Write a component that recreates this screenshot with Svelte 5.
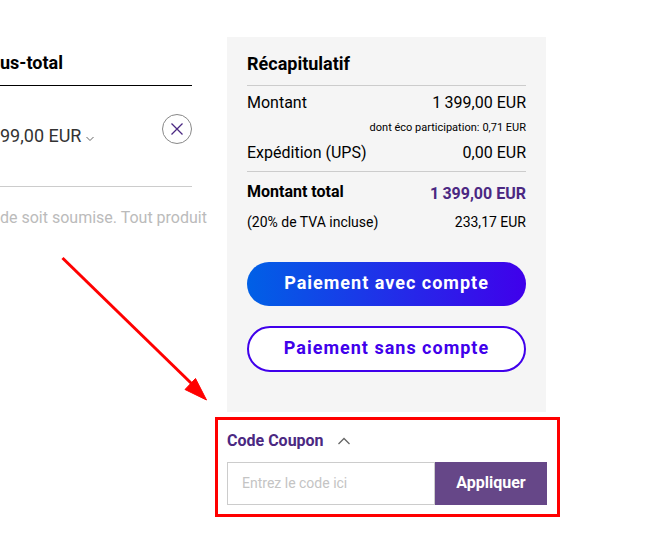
<script>
  let code = $state("");
  let couponOpen = $state(true);
</script>

<div class="page">
  <main class="cart">
    <table class="items">
      <thead>
        <tr>
          <th colspan="2">us-total</th>
        </tr>
      </thead>
      <tbody>
        <tr>
          <td>
            99,00 EUR
            <svg class="caret" viewBox="0 0 8 6" aria-hidden="true">
              <path d="M0.5 1 4 4.5 7.5 1" />
            </svg>
          </td>
          <td class="action">
            <button class="remove" type="button" aria-label="Supprimer">
              <svg viewBox="0 0 12 12" aria-hidden="true">
                <path d="M0.5 0.5 11.5 11.5M11.5 0.5 0.5 11.5" />
              </svg>
            </button>
          </td>
        </tr>
      </tbody>
    </table>
    <p class="note">de soit soumise. Tout produit</p>
    <svg class="arrow" viewBox="0 0 150 150" aria-hidden="true">
      <path class="shaft" d="M0.5 2 130 128" />
      <path class="head" d="M144.5 144 123 133.5 133.5 122.5Z" />
    </svg>
  </main>

  <aside class="side">
    <section class="summary">
      <h2>Récapitulatif</h2>
      <dl class="amounts">
        <div class="row">
          <dt>Montant</dt>
          <dd>1&#8201;399,00 EUR</dd>
        </div>
        <div class="row eco">
          <dt>dont éco participation:</dt>
          <dd>0,71 EUR</dd>
        </div>
        <div class="row">
          <dt>Expédition (UPS)</dt>
          <dd>0,00 EUR</dd>
        </div>
      </dl>
      <dl class="totals">
        <div class="row total">
          <dt>Montant total</dt>
          <dd>1&#8201;399,00 EUR</dd>
        </div>
        <div class="row tax">
          <dt>(20% de TVA incluse)</dt>
          <dd>233,17 EUR</dd>
        </div>
      </dl>
      <div class="checkout">
        <button class="pay primary" type="button">Paiement avec compte</button>
        <button class="pay secondary" type="button">Paiement sans compte</button>
      </div>
    </section>

    <form class="coupon" onsubmit={(e) => e.preventDefault()}>
      <button
        class="toggle"
        type="button"
        aria-expanded={couponOpen}
        onclick={() => (couponOpen = !couponOpen)}
      >
        Code Coupon
        <svg class:closed={!couponOpen} viewBox="0 0 12 8" aria-hidden="true">
          <path d="M0.5 7 6 1.5 11.5 7" />
        </svg>
      </button>
      {#if couponOpen}
        <div class="field">
          <input
            type="text"
            aria-label="Code Coupon"
            placeholder="Entrez le code ici"
            bind:value={code}
          />
          <button class="apply" type="submit">Appliquer</button>
        </div>
      {/if}
    </form>
  </aside>
</div>

<style>
  :global(body) {
    background: #fff;
  }

  .page {
    display: grid;
    grid-template-columns: minmax(0, 1fr) 319px;
    gap: 20px;
    padding: 37px 100px 30px 0;
    font-family: Roboto, "Liberation Sans", sans-serif;
    font-size: 16px;
    line-height: 20px;
    color: #000;
  }

  button,
  input {
    margin: 0;
    box-sizing: border-box;
    font-family: inherit;
  }

  button {
    padding: 0;
    border: 0;
    background: none;
    cursor: pointer;
  }

  svg {
    fill: none;
    stroke: #666;
  }

  .cart {
    position: relative;
  }

  .items {
    width: calc(100% - 15px);
    border-collapse: separate;
    border-spacing: 0;
  }

  .items th {
    padding: 14px 0 10px;
    border-bottom: 1px solid #000;
    font-size: 18px;
    font-weight: 700;
    line-height: 24px;
    text-align: left;
  }

  .items td {
    height: 100px;
    padding: 0;
    border-bottom: 1px solid #ccc;
    font-size: 18px;
    color: #333;
    white-space: nowrap;
  }

  .items .action {
    padding-bottom: 14px;
    height: 86px;
    text-align: right;
  }

  .caret {
    width: 8px;
    height: 6px;
  }

  .remove {
    display: inline-flex;
    align-items: center;
    justify-content: center;
    width: 30px;
    height: 30px;
    border: 1px solid #888;
    border-radius: 50%;
    vertical-align: middle;
  }

  .remove svg {
    width: 12px;
    height: 12px;
    stroke: #4b2882;
    stroke-width: 1.3;
  }

  .note {
    margin: 21px 0 0;
    color: #bbb;
    white-space: nowrap;
  }

  .arrow {
    position: absolute;
    top: 219px;
    right: -5px;
    width: 150px;
    height: 150px;
    overflow: visible;
  }

  .shaft {
    stroke: #f00;
    stroke-width: 3;
  }

  .head {
    fill: #f00;
    stroke: #f00;
  }

  .summary {
    padding: 15px 20px 40px;
    background: #f5f5f5;
  }

  h2 {
    margin: 0;
    padding-bottom: 9px;
    font-size: 18px;
    font-weight: 700;
    line-height: 24px;
  }

  dl,
  dd {
    margin: 0;
  }

  .amounts,
  .totals {
    display: flex;
    flex-direction: column;
    border-top: 1px solid #ccc;
  }

  .amounts {
    gap: 5px;
    padding: 7px 0 8px;
  }

  .totals {
    gap: 6px;
    padding: 10px 0 30px;
  }

  .row {
    display: flex;
    justify-content: space-between;
  }

  .eco {
    justify-content: flex-end;
    gap: 3px;
    font-size: 11px;
  }

  .total {
    font-weight: 700;
  }

  .total dd {
    line-height: 24px;
    color: #4b2882;
  }

  .tax {
    font-size: 14px;
  }

  .checkout {
    display: flex;
    flex-direction: column;
    gap: 20px;
  }

  .pay {
    padding-bottom: 3px;
    border-radius: 23px;
    font-size: 18px;
    font-weight: 700;
    letter-spacing: 1px;
  }

  .primary {
    height: 44px;
    background: linear-gradient(90deg, #0060e6, #4000eb);
    color: #fff;
  }

  .secondary {
    height: 46px;
    border: 2px solid #4000eb;
    background: #fff;
    color: #4000eb;
  }

  .coupon {
    position: relative;
    padding-top: 19px;
  }

  /* red frame that the arrow points to */
  .coupon::after {
    content: "";
    position: absolute;
    inset: 5px -14px -12px -12px;
    border: 3px solid #f00;
    pointer-events: none;
  }

  .toggle {
    display: flex;
    align-items: center;
    gap: 14px;
    font-size: 16px;
    font-weight: 700;
    line-height: 20px;
    color: #4b2882;
  }

  .toggle svg {
    width: 12px;
    height: 8px;
    stroke-width: 1.3;
  }

  .toggle .closed {
    transform: rotate(180deg);
  }

  .field {
    display: flex;
    margin-right: -1px;
    padding-top: 11px;
  }

  input {
    flex: 1;
    min-width: 0;
    height: 43px;
    padding: 0 14px 2px;
    border: 1px solid #ccc;
    border-radius: 0;
    background: #fff;
    font-size: 14px;
  }

  input::placeholder {
    color: #c4c4c4;
  }

  .apply {
    width: 112px;
    height: 43px;
    padding-bottom: 2px;
    background: #664788;
    font-size: 16px;
    font-weight: 700;
    color: #fff;
  }
</style>
